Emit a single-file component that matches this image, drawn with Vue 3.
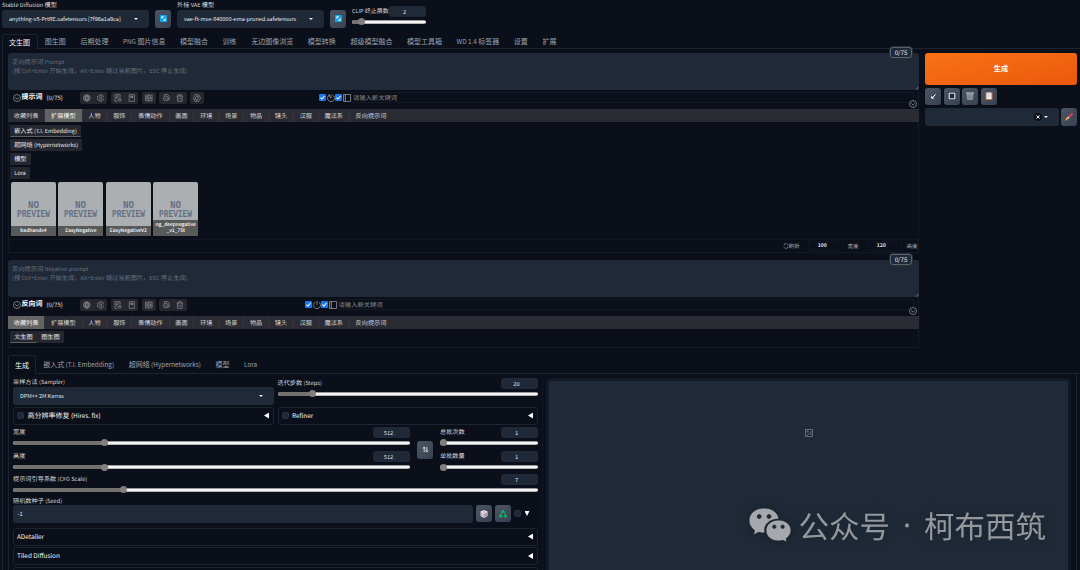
<template>
  <div class="app">
    <header class="quick">
      <div v-for="model in models" :key="model.label" class="quick__model">
        <div class="quick__field">
          <span class="label quick__label"><MixedText :text="model.label" /></span>
          <div class="select quick__select">
            <MixedText :text="model.value" />
            <i class="caret"></i>
          </div>
        </div>
        <button type="button" class="tool">
          <svg class="tool__icon tool__icon--refresh" viewBox="0 0 16 16">
            <rect width="16" height="16" rx="2" fill="#12a5ee" />
            <path d="M4 8V4h5M12 8v4H7M4 4l3 3M12 12 9 9" fill="none" stroke="#fff" stroke-width="1.8" />
          </svg>
        </button>
      </div>
      <div class="clip">
        <div class="clip__head">
          <span class="label"><MixedText text="CLIP 终止层数" /></span>
          <span class="number">2</span>
        </div>
        <div class="slider">
          <i class="slider__fill" :style="{ width: '12.5%' }"></i>
          <i class="slider__thumb"></i>
        </div>
      </div>
    </header>

    <nav class="tabs">
      <button
        v-for="(tab, i) in mainTabs"
        :key="tab"
        type="button"
        class="tabs__item"
        :class="{ 'tabs__item--active': i === 0 }"
      ><MixedText :text="tab" /></button>
    </nav>

    <main class="page">
      <div class="top">
        <div class="prompts">
          <section v-for="p in prompts" :key="p.title" class="prompt" :class="`prompt--${p.kind}`">
            <div class="prompt__area">
              <p><MixedText :text="p.placeholder" /></p>
              <p><MixedText text="(按 Ctrl+Enter 开始生成，Alt+Enter 跳过当前图片，ESC 停止生成)" /></p>
              <span class="prompt__count">0/75</span>
              <svg class="prompt__grip" viewBox="0 0 6 6"><path d="M1 5.5 5.5 1M3.5 5.5l2-2" stroke="#a5a9b0" stroke-width=".8" /></svg>
            </div>
            <div class="prompt__box">
              <div class="prompt__bar">
                <svg class="icon icon--chevron" viewBox="0 0 16 16"><circle cx="8" cy="8" r="7" /><path d="m4.5 6.5 3.5 4 3.5-4" /></svg>
                <b class="prompt__title">{{ p.title }}</b>
                <span class="prompt__tokens">(0/75)</span>
                <div class="prompt__tools">
                  <span v-for="(group, g) in p.groups" :key="g" class="prompt__group">
                    <svg v-for="name in group" :key="name" class="icon" viewBox="0 0 16 16"><path :d="icons[name]" /></svg>
                  </span>
                </div>
                <div class="prompt__checks">
                  <i class="check"><svg viewBox="0 0 8 8"><path d="M1.7 4.2 3.3 5.7 6.4 2.3" /></svg></i>
                  <svg class="icon" viewBox="0 0 16 16"><path :d="p.kind === 'positive' ? icons.clock : icons.power" /></svg>
                  <i class="check"><svg viewBox="0 0 8 8"><path d="M1.7 4.2 3.3 5.7 6.4 2.3" /></svg></i>
                  <svg class="icon" viewBox="0 0 16 16"><path :d="icons.panel" /></svg>
                </div>
                <span class="prompt__input">请输入新关键词</span>
                <svg class="icon prompt__fold" viewBox="0 0 16 16"><circle cx="8" cy="8" r="7" /><path d="m4.5 6.5 3.5 4 3.5-4" /></svg>
              </div>
              <div class="groups">
                <span
                  v-for="(name, i) in groupTabs"
                  :key="name"
                  class="groups__item"
                  :class="{ 'groups__item--active': i === p.activeGroup }"
                >{{ name }}</span>
              </div>

              <template v-if="p.kind === 'positive'">
                <div class="networks">
                  <span v-for="(name, i) in networks" :key="name" class="chip" :class="{ 'chip--active': i === 0 }"><MixedText :text="name" /></span>
                </div>
                <div class="cards">
                  <article v-for="card in cards" :key="card[0]" class="card">
                    <svg class="card__art" viewBox="0 0 45 54">
                      <circle cx="15.5" cy="24.5" r=".6" fill="#d99b98" /><circle cx="29.5" cy="25.5" r=".6" fill="#d99b98" />
                      <circle cx="15.5" cy="19" r=".5" fill="#91b8bc" /><circle cx="30" cy="20" r=".5" fill="#91b8bc" />
                      <text x="17" y="25.5" textLength="11" lengthAdjust="spacingAndGlyphs">NO</text>
                      <text x="6" y="35.2" textLength="33" lengthAdjust="spacingAndGlyphs">PREVIEW</text>
                    </svg>
                    <footer class="card__name"><span v-for="line in card" :key="line">{{ line }}</span></footer>
                  </article>
                </div>
                <div class="sizes">
                  <svg class="icon" viewBox="0 0 16 16"><path d="M2 9a6 6 0 0 0 10 4M14 7A6 6 0 0 0 4 3M10 14l3-1-1-3M6 2 3 3l1 3" /></svg>
                  <span class="sizes__refresh">刷新</span>
                  <b class="sizes__value">100</b>
                  <span class="sizes__label">宽度</span>
                  <b class="sizes__value">120</b>
                  <span class="sizes__label sizes__label--last">高度</span>
                </div>
              </template>
              <div v-else class="favs">
                <span class="chip chip--active">文生图</span>
                <span class="chip">图生图</span>
              </div>
            </div>
          </section>
        </div>

        <aside class="actions">
          <button type="button" class="generate">生成</button>
          <div class="actions__tools">
            <button type="button" class="tool">
              <svg class="tool__icon tool__icon--arrow" viewBox="0 0 16 16"><path d="M13 3 5 11M4 7v5h5" fill="none" stroke="#fff" stroke-width="2.2" /></svg>
            </button>
            <button type="button" class="tool">
              <svg class="tool__icon" viewBox="0 0 16 16"><rect x="2.5" y="2.5" width="11" height="11" rx="1.5" fill="#1f2937" stroke="#c5dbe9" stroke-width="2.4" /></svg>
            </button>
            <button type="button" class="tool">
              <svg class="tool__icon" viewBox="0 0 16 16"><path d="M.5 1h15v3H.5zM2 5h12l-1 10H3z" fill="#8c949b" stroke="#aab0b5" /><path d="M5 6v8M8 6v8M11 6v8M3 10h10" stroke="#727b83" /></svg>
            </button>
            <button type="button" class="tool">
              <svg class="tool__icon" viewBox="0 0 16 16"><rect x="1" width="14" height="16" rx="1" fill="#bd704a" /><path d="M3 2h10v12H3z" fill="#f4f2ee" /><path d="M5 0h6v3H5z" fill="#a9b5bf" /><path d="M5 6h6M5 8.5h6M5 11h3" stroke="#b7bdc4" /></svg>
            </button>
          </div>
          <div class="actions__styles">
            <div class="select actions__select">
              <svg class="clear" viewBox="0 0 10 10"><circle cx="5" cy="5" r="5" fill="#0b0f19" /><path d="m3 3 4 4M7 3 3 7" stroke="#fff" stroke-width="1.2" /></svg>
              <i class="caret"></i>
            </div>
            <button type="button" class="tool">
              <svg class="tool__icon" viewBox="0 0 16 16"><path d="M14 2 7 9" stroke="#dd3b59" stroke-width="4" stroke-linecap="round" /><path d="M7.5 8.5 5.5 10.5" stroke="#d9dde2" stroke-width="4" /><path d="M6 10c-1 4-3 5-6 5 2-1 1-6 5-6z" fill="#efad36" /></svg>
            </button>
          </div>
        </aside>
      </div>

      <nav class="tabs tabs--sub">
        <button
          v-for="(tab, i) in subTabs"
          :key="tab"
          type="button"
          class="tabs__item"
          :class="{ 'tabs__item--active': i === 0 }"
        ><MixedText :text="tab" /></button>
      </nav>

      <div class="workspace">
        <div class="form">
          <div class="form__pair form__pair--sampler">
            <div>
              <span class="label form__label"><MixedText text="采样方法 (Sampler)" /></span>
              <div class="select form__select"><MixedText text="DPM++ 2M Karras" /><i class="caret"></i></div>
            </div>
            <div class="range">
              <div class="range__head"><span class="label"><MixedText text="迭代步数 (Steps)" /></span><span class="number">20</span></div>
              <div class="slider"><i class="slider__fill" :style="{ width: '13.6%' }"></i><i class="slider__thumb"></i></div>
            </div>
          </div>
          <div class="form__pair">
            <div v-for="name in ['高分辨率修复 (Hires. fix)', 'Refiner']" :key="name" class="fold fold--check">
              <i class="checkbox"></i><MixedText :text="name" /><i class="arrow"></i>
            </div>
          </div>

          <div class="dims">
            <div class="dims__size">
              <div v-for="r in sizeRanges" :key="r.label" class="range">
                <div class="range__head"><span class="label">{{ r.label }}</span><span class="number">{{ r.value }}</span></div>
                <div class="slider"><i class="slider__fill" :style="{ width: r.fill }"></i><i class="slider__thumb"></i></div>
              </div>
            </div>
            <button type="button" class="tool tool--swap">
              <svg class="tool__icon tool__icon--refresh" viewBox="0 0 16 16"><path d="M5 14V3M2 6l3-4 3 4M11 2v11M8 10l3 4 3-4" fill="none" stroke="#f3f4f6" stroke-width="1.8" /></svg>
            </button>
            <div class="dims__batch">
              <div v-for="r in batchRanges" :key="r.label" class="range">
                <div class="range__head"><span class="label">{{ r.label }}</span><span class="number">{{ r.value }}</span></div>
                <div class="slider"><i class="slider__fill" :style="{ width: r.fill }"></i><i class="slider__thumb"></i></div>
              </div>
            </div>
          </div>

          <div class="range range--cfg">
            <div class="range__head"><span class="label"><MixedText text="提示词引导系数 (CFG Scale)" /></span><span class="number">7</span></div>
            <div class="slider"><i class="slider__fill" :style="{ width: '21.1%' }"></i><i class="slider__thumb"></i></div>
          </div>

          <span class="label seed__label"><MixedText text="随机数种子 (Seed)" /></span>
          <div class="seed">
            <div class="seed__input">-1</div>
            <button type="button" class="tool">
              <svg class="tool__icon" viewBox="0 0 16 16"><path d="m8 0 7 3v9l-7 4-7-4V3z" fill="#d8ced8" /><path d="m1 4 7 3 7-3-7-3z" fill="#f6f0f5" /><path d="m8 7 7-3v8l-7 4z" fill="#b5a5b5" /><circle cx="8" cy="4" r="1.3" fill="#c3324f" /><path d="M3 7v1M5 10v1M10 9v1M13 10v1" stroke="#564a5a" stroke-width="1.5" /></svg>
            </button>
            <button type="button" class="tool">
              <svg class="tool__icon" viewBox="0 0 16 16"><path d="m4.5 6 3.5-4 3.5 4M12 8l2 5h-4M7 13H2l2-5" fill="none" stroke="#09bd67" stroke-width="3.2" /></svg>
            </button>
            <i class="checkbox"></i>
            <i class="arrow arrow--down"></i>
          </div>

          <div v-for="name in ['ADetailer', 'Tiled Diffusion']" :key="name" class="fold fold--script">
            <MixedText :text="name" /><i class="arrow"></i>
          </div>
          <div class="fold fold--script"></div>
        </div>

        <div class="gallery">
          <div class="gallery__view">
            <svg class="gallery__icon" viewBox="0 0 16 16"><rect x="1" y="1" width="14" height="14" /><circle cx="5" cy="5" r="1.5" /><path d="m3 14 6-6 5 4M10 6h4" /></svg>
          </div>
        </div>
      </div>
    </main>

    <div class="mark">
      <svg class="mark__logo" viewBox="0 0 42 34">
        <path d="M15 0C6.500 0 0 5.500 0 12.500c0 4 2.200 7.500 5.500 10L4.500 27l5-2.700c2 .6 4 .8 6.500.7C14 17 20 11 30 11 29 4.500 23 0 15 0z" />
        <path d="M29.500 12C22.500 12 17 16.500 17 22.500S22.500 33 29.500 33c1.500 0 3-.2 4.500-.7l4 2-1-3.600c3-2 5-5 5-8.200C42 16.500 36.500 12 29.500 12z" />
        <g class="mark__eyes"><circle cx="10.2" cy="8.5" r="2" /><circle cx="20" cy="8.5" r="2" /><circle cx="25.3" cy="18.7" r="1.7" /><circle cx="33.6" cy="18.7" r="1.7" /></g>
      </svg>
      <span class="mark__text">公众号</span>
      <i class="mark__dot">·</i>
      <span class="mark__text">柯布西筑</span>
    </div>
  </div>
</template>

<script setup>
 import { h } from 'vue'

 // Latin runs are set a little smaller than the Chinese text around them
 const MixedText = (props) => h(
   'span',
   props.text
     .split(/([\x20-\x7e]+)/)
     .filter(Boolean)
     .map((run) => (/^[\x20-\x7e]/.test(run) ? h('span', { class: 'latin' }, run) : run))
 )
 MixedText.props = ['text']

 const models = [
   { label: 'Stable Diffusion 模型', value: 'anything-v5-PrtRE.safetensors [7f96a1a9ca]' },
   { label: '外挂 VAE 模型', value: 'vae-ft-mse-840000-ema-pruned.safetensors' }
 ]

 const mainTabs = [
   '文生图', '图生图', '后期处理', 'PNG 图片信息', '模型融合', '训练', '无边图像浏览',
   '模型转换', '超级模型融合', '模型工具箱', 'WD 1.4 标签器', '设置', '扩展'
 ]

 const subTabs = ['生成', '嵌入式 (T.I. Embedding)', '超网络 (Hypernetworks)', '模型', 'Lora']

 const groupTabs = [
   '收藏列表', '扩展模型', '人物', '服饰', '表情动作', '画面', '环境',
   '场景', '物品', '镜头', '汉服', '魔法系', '反向提示词'
 ]

 const networks = ['嵌入式 (T.I. Embedding)', '超网络 (Hypernetworks)', '模型', 'Lora']

 const cards = [['badhandv4'], ['EasyNegative'], ['EasyNegativeV2'], ['ng_deepnegative', '_v1_75t']]

 const toolGroups = [['globe', 'gear'], ['history', 'bookmark'], ['translate'], ['copy', 'trash']]

 const prompts = [
   {
     kind: 'positive',
     title: '提示词',
     placeholder: '正向提示词 Prompt',
     groups: [...toolGroups, ['openai']],
     activeGroup: 1
   },
   {
     kind: 'negative',
     title: '反向词',
     placeholder: '反向提示词 Negative prompt',
     groups: toolGroups,
     activeGroup: 0
   }
 ]

 const sizeRanges = [
   { label: '宽度', value: 512, fill: '23.1%' },
   { label: '高度', value: 512, fill: '23.1%' }
 ]

 const batchRanges = [
   { label: '总批次数', value: 1, fill: '3.5%' },
   { label: '单批数量', value: 1, fill: '3.5%' }
 ]

 const icons = {
   globe: 'M8 1a7 7 0 1 0 0 14A7 7 0 0 0 8 1zM1 8h14M3 4.5h10M3 11.5h10M8 1C4 4 4 12 8 15M8 1c4 3 4 11 0 14',
   gear: 'M6.5 1h3l.5 2 2 1 2-.5 1.5 3L14 8l1.5 1.5-1.5 3-2-.5-2 1-.5 2h-3L6 13l-2-1-2 .5-1.5-3L2 8 .5 6.5l1.5-3L4 4l2-1zM8 5.5a2.5 2.5 0 1 0 0 5 2.5 2.5 0 0 0 0-5z',
   history: 'M13 7V1H2v14h5M4 4h7M4 7h5M4 10h3M12 9a3 3 0 1 0 0 6 3 3 0 0 0 0-6zM12 10.5V12h1.5',
   bookmark: 'M2.5 1h11v14h-11zM6 4h4v4L8 6.5 6 8zM6.5 4v3M9.5 4v3',
   translate: 'M1 2h14v12H1zM8 1v14M3 6h3M3 9h3M4.5 4v8M10 11l1.5-6 2 6M10 9h3',
   copy: 'M5 1h7l3 3v8h-4M5 1v3M8 4a5 5 0 1 0 0 10A5 5 0 0 0 8 4zM5 9l3 1 2-3',
   trash: 'M1 4h14M5 4V1h6v3M3 4v11h10V4M6 7v5M10 7v5',
   openai: 'M8 1a4 4 0 0 1 5.5 3A4 4 0 0 1 14 11a4 4 0 0 1-6 4 4 4 0 0 1-5.5-3A4 4 0 0 1 2 5a4 4 0 0 1 6-4zM8 4.5 11 6v4l-3 1.5L5 10V6zM11 6l3-1M5 10l-3 1M8 4.5V1M8 11.5V15',
   clock: 'M5 2a7 7 0 1 0 6 0M8 1v7M5 5l3 3M2 2l3 0v3',
   power: 'M5 2a7 7 0 1 0 6 0M8 0v8',
   panel: 'M1 1h14v14H1zM5 1v14M1 4h2M1 8h2M1 12h2'
 }
</script>

<style>
html,
body {
  margin: 0;
  background: #0b0f19;
}

.latin {
  font-size: 0.91em;
  white-space: pre;
}
</style>

<style scoped>
* {
  box-sizing: border-box;
}

.app {
  position: relative;
  width: 1080px;
  height: 570px;
  padding: 0 0 0 2px;
  overflow: hidden;
  display: flex;
  flex-direction: column;
  background: #0b0f19;
  color: #e5e7eb;
  font: 6.2px/9px "Noto Sans CJK SC", sans-serif;
  text-rendering: geometricPrecision;
}

button {
  padding: 0;
  border: 0;
  color: inherit;
  font: inherit;
}

p {
  margin: 0;
}

svg {
  display: block;
  flex: none;
}

.label {
  white-space: nowrap;
  color: #d5d8dd;
}

/* quick settings */
.quick {
  display: flex;
  gap: 6px;
  height: 34px;
  flex: none;
}

.quick__model {
  display: flex;
  align-items: flex-start;
  gap: 6px;
}

.quick__model > .tool {
  margin-top: 10px;
}

.quick__field {
  width: 147px;
}

.quick__label {
  display: block;
  height: 9.5px;
  line-height: 10px;
}

.select {
  display: flex;
  align-items: center;
  justify-content: space-between;
  height: 18px;
  padding: 0 11px 0 7px;
  border-radius: 3px;
  background: #1f2937;
}

.quick__select {
  font-size: 6.05px;
}

.caret {
  border: 2px solid transparent;
  border-top-color: #f3f4f6;
  border-bottom: 0;
}

.tool {
  display: flex;
  align-items: center;
  justify-content: center;
  flex: none;
  width: 16px;
  height: 17.5px;
  border-radius: 3px;
  background: linear-gradient(135deg, #4b5563, #374151);
}

.tool__icon {
  width: 8px;
  height: 8px;
}

.tool__icon--refresh {
  width: 7px;
  height: 7px;
}

.tool__icon--arrow {
  width: 7px;
  height: 7px;
}

.clip {
  width: 74px;
  padding-top: 6px;
}

.clip__head {
  display: flex;
  height: 13.5px;
}

.clip__head .label {
  flex: none;
  width: 37px;
  font-size: 6px;
}

.number {
  flex: none;
  width: 37px;
  height: 11px;
  padding-right: 6px;
  border-radius: 3px;
  background: #1f2937;
  line-height: 11px;
  text-align: center;
  font-size: 5.7px;
}

.slider {
  display: flex;
  align-items: center;
  height: 4px;
  border-radius: 2px;
  background: linear-gradient(#9a999b 0 12%, #f6f4f5 35% 70%, #9a999b 95%);
}

.slider__fill {
  height: 4px;
  border-radius: 2px 0 0 2px;
  background: #73716f;
}

.slider__thumb {
  flex: none;
  width: 7px;
  height: 7px;
  margin-left: -3.5px;
  border-radius: 50%;
  background: #82807f;
}

/* tabs */
.tabs {
  display: flex;
  flex: none;
  height: 15px;
  border-bottom: 1px solid #1c2430;
}

.tabs__item {
  height: 15px;
  padding: 0 7.3px;
  background: none;
  color: #9ca3af;
  font-size: 7px;
  line-height: 15px;
  white-space: nowrap;
}

.tabs__item--active {
  padding: 0 6.5px 0 6px;
  border: 1px solid #1c2430;
  border-bottom: 0;
  border-radius: 3px 3px 0 0;
  background: #0b0f19;
  color: #f3f4f6;
  line-height: 13px;
}

.page {
  flex: 1;
  padding: 4px 0 0 5px;
  border-left: 1px solid #1c2430;
}

.top {
  display: flex;
  gap: 6px;
  height: 302px;
}

.prompts {
  width: 911px;
}

/* prompt editors */
.prompt--positive {
  height: 207px;
}

.prompt__area {
  position: relative;
  height: 37px;
  padding: 4px 4.25px 0;
  border-radius: 3px;
  background: #1f2937;
  color: #677180;
}

.prompt--negative .prompt__area {
  padding-top: 3.5px;
}

.prompt__count {
  position: absolute;
  top: -6px;
  right: 7px;
  width: 22px;
  height: 11px;
  border: 1px solid #5b626c;
  border-radius: 3px;
  background: #1f2937;
  box-shadow: 0 0 0 1px #273039;
  color: #e5e7eb;
  line-height: 9px;
  text-align: center;
}

.prompt__grip {
  position: absolute;
  right: 0;
  bottom: 0;
  width: 4px;
  height: 4px;
}

.prompt__box {
  border: 1px solid #141a25;
  border-top: 0;
}

.prompt--positive .prompt__box {
  height: 163px;
}

.prompt--negative .prompt__box {
  height: 51px;
}

.prompt__bar {
  position: relative;
  display: flex;
  align-items: center;
  height: 15.5px;
  margin-bottom: 3.5px;
  padding: 0 4px 0 3.5px;
}

.icon {
  width: 8px;
  height: 8px;
  fill: none;
  stroke: #a9abae;
  stroke-width: 1.3;
}

.prompt__title {
  width: 25px;
  margin-left: 1px;
  color: #fff;
  font-size: 7px;
}

.prompt__tokens {
  width: 33.5px;
  font-size: 6px;
}

.prompt__tools {
  display: flex;
  gap: 3.8px;
}

.prompt__group {
  display: flex;
  align-items: center;
  gap: 6px;
  height: 12px;
  padding: 0 3px;
  border-radius: 2px;
  background: #25272f;
}

.prompt__group .icon {
  width: 7.6px;
  stroke: #9b9ca0;
}

.prompt__checks {
  display: flex;
  align-items: center;
  width: 32px;
  margin-left: 115px;
}

.prompt--negative .prompt__checks {
  margin-left: 118px;
}

.check {
  width: 7px;
  height: 7px;
  margin-right: 1px;
  border-radius: 1px;
  background: #1677f2;
}

.check svg {
  fill: none;
  stroke: #fff;
  stroke-width: 1.2;
}

.prompt__input {
  flex: 1;
  height: 11px;
  padding-left: 1px;
  border: 1px solid #141a25;
  color: #858688;
  font-size: 6.3px;
  line-height: 9px;
}

.prompt__fold {
  position: absolute;
  right: 1px;
  bottom: -2.5px;
}

.groups {
  display: flex;
  height: 13px;
  margin: 0 -1px;
  background: #2a2b33;
  line-height: 13px;
}

.groups__item {
  padding: 0 5.75px;
  border-right: 1px solid #34353c;
  color: #d1d2d5;
}

.groups__item:last-child {
  border-right: 0;
}

.groups__item--active {
  background: #636363;
  color: #f1f1f1;
}

.networks {
  display: flex;
  flex-direction: column;
  align-items: flex-start;
  gap: 2px;
  padding: 3px 0 0 1px;
}

.chip {
  height: 12px;
  padding: 0 4.2px;
  border-bottom: 1px solid transparent;
  border-radius: 1px;
  background: #25272f;
  line-height: 11px;
}

.chip--active {
  border-bottom-color: #5c5e62;
}

.cards {
  display: flex;
  gap: 2.6px;
  padding: 3px 0 0 2px;
}

.card {
  display: grid;
  width: 44.8px;
  height: 54px;
  overflow: hidden;
  border-radius: 2px;
  background: #abafb2;
}

.card__art {
  grid-area: 1 / 1;
  width: 45px;
  height: 54px;
  fill: #667085;
  font: bold 10.5px "Liberation Mono", monospace;
}

.card__name {
  grid-area: 1 / 1;
  align-self: end;
  display: flex;
  flex-direction: column;
  padding: 2px 0 3px;
  background: #585a5a;
  color: #fff;
  font-size: 4.9px;
  font-weight: 500;
  line-height: 5.5px;
  text-align: center;
}

.sizes {
  display: flex;
  align-items: center;
  justify-content: flex-end;
  height: 13px;
  margin-top: 3px;
  border-top: 1px solid #111722;
  color: #a9abae;
  font-size: 5.5px;
}

.sizes .icon {
  width: 6px;
  height: 6px;
}

.sizes__refresh {
  width: 19px;
}

.sizes__value {
  width: 35.5px;
  height: 10px;
  padding-right: 6px;
  border: 1px solid #111722;
  color: #e5e7eb;
  font-size: 5.2px;
  line-height: 8px;
  text-align: center;
}

.sizes__label {
  width: 23.5px;
  padding-left: 4.5px;
}

.sizes__label--last {
  width: 16px;
}

.favs {
  display: flex;
  padding: 2px 0 0 1px;
}

/* right-hand actions */
.actions {
  width: 152px;
}

.generate {
  display: block;
  width: 152px;
  height: 31.5px;
  border-radius: 3px;
  background: linear-gradient(to bottom right, #f97316, #ea580c);
  color: #fff;
  font-size: 7.2px;
  font-weight: 700;
}

.actions__tools {
  display: flex;
  gap: 2.5px;
  padding: 3px 0;
}

.actions__styles {
  display: flex;
  align-items: center;
  gap: 2.5px;
}

.actions__select {
  flex: 1;
  justify-content: flex-end;
  gap: 2px;
  padding-right: 11px;
}

.clear {
  width: 8px;
  height: 8px;
}

/* lower half */
.tabs--sub {
  height: 19px;
}

.tabs--sub .tabs__item {
  height: 19px;
  line-height: 19px;
}

.tabs--sub .tabs__item--active {
  padding: 0 6px;
  line-height: 16px;
}

.workspace {
  display: flex;
  width: 1069px;
  height: 197px;
  padding: 4px 5px 0 4px;
  border: 1px solid #1c2430;
  border-width: 0 1px;
}

.form {
  width: 530px;
  height: 193px;
  padding-right: 4px;
  overflow: hidden;
  border-right: 1px dashed #151b27;
}

.form__pair {
  display: grid;
  grid-template-columns: 261px 260.5px;
  gap: 3.5px;
}

.form__pair--sampler {
  height: 28.5px;
}

.form__label {
  display: block;
  height: 8.5px;
  line-height: 8.5px;
}

.form__select {
  font-size: 6px;
}

.range {
  height: 24.5px;
}

.range__head {
  display: flex;
  justify-content: space-between;
  height: 13.5px;
}

.fold {
  display: flex;
  align-items: center;
  justify-content: space-between;
  height: 18px;
  padding: 0 4px 0 3px;
  border: 1px solid #1c2430;
  border-radius: 3px;
  font-size: 7px;
  color: #f3f4f6;
}

.fold--check {
  justify-content: flex-start;
  gap: 3.5px;
}

.fold--check .arrow {
  margin-left: auto;
}

.checkbox {
  flex: none;
  width: 7px;
  height: 7px;
  border: 1px solid #263141;
  border-radius: 2px;
  background: #1f2937;
}

.arrow {
  width: 5px;
  height: 6px;
  background: #fff;
  clip-path: polygon(0 50%, 100% 0, 100% 100%);
}

.arrow--down {
  height: 5px;
  clip-path: polygon(0 0, 100% 0, 50% 100%);
}

.dims {
  display: flex;
  height: 49px;
  padding-top: 2px;
}

.dims .range__head {
  height: 14px;
}

.dims__size {
  width: 397px;
}

.tool--swap {
  margin: 14.5px 7px 0;
}

.dims__batch {
  width: 98px;
}

.range--cfg {
  width: 525px;
  height: 22.5px;
}

.range--cfg .range__head {
  height: 14px;
}

.seed__label {
  display: block;
  height: 8.5px;
  line-height: 10px;
}

.seed {
  display: flex;
  align-items: center;
  gap: 3px;
  height: 18px;
  margin-bottom: 5px;
}

.seed__input {
  width: 460px;
  height: 18px;
  padding-left: 4.5px;
  border-radius: 3px;
  background: #1f2937;
  font-size: 5.8px;
  line-height: 18px;
}

.seed .checkbox {
  margin-left: -0.5px;
}

.seed .arrow {
  margin-left: 1px;
}

.fold--script {
  width: 525px;
  margin-bottom: 1.5px;
}

.gallery {
  flex: 1;
  margin-left: 3px;
  padding: 3px 3px 0;
  border-radius: 3px 3px 0 0;
  background: #111827;
}

.gallery__view {
  height: 190px;
  padding: 48px 0 0 255.5px;
  background: #1f2937;
}

.gallery__icon {
  width: 8px;
  height: 8px;
  fill: none;
  stroke: #858c96;
  stroke-width: 1.3;
}

/* floating account mark */
.mark {
  position: absolute;
  left: 749px;
  top: 505px;
  display: flex;
  align-items: center;
  height: 40px;
  color: #94989d;
  line-height: 40px;
  filter: drop-shadow(0 0 5px #17202b);
}

.mark__logo {
  width: 42px;
  height: 34px;
  margin-right: 7.5px;
  fill: #a5a8ac;
  stroke: #1f2937;
  stroke-width: .8;
}

.mark__eyes {
  fill: #1f2937;
}

.mark__text {
  font-size: 30.5px;
}

.mark__dot {
  width: 34px;
  font: normal 30px/44px "Noto Sans", sans-serif;
  text-align: center;
}
</style>
